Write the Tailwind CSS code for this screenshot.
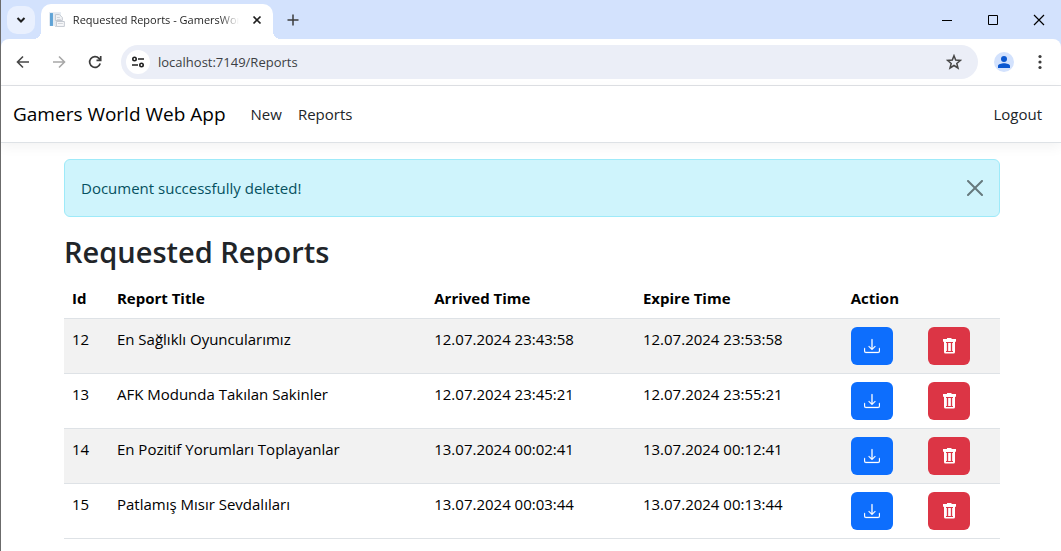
<!DOCTYPE html>
<html lang="en">
<head>
<meta charset="utf-8">
<title>Requested Reports - GamersWorld</title>
<script src="https://cdn.jsdelivr.net/npm/@tailwindcss/browser@4"></script>
</head>
<body class="min-h-screen overflow-hidden border-l border-[#6b6b6b] bg-white font-['Open_Sans','Noto_Sans',sans-serif] text-[15px] leading-6 text-[#212529]">
<svg class="hidden">
  <symbol id="download" viewBox="0 0 16 16"><path d="M.5 9.900a.5.5 0 0 1 .5.5v2.500a1 1 0 0 0 1 1h12a1 1 0 0 0 1-1v-2.500a.5.5 0 0 1 1 0v2.500a2 2 0 0 1-2 2H2a2 2 0 0 1-2-2v-2.500a.5.5 0 0 1 .5-.5" stroke="currentColor" stroke-width=".3"/><path d="M7.646 11.854a.5.5 0 0 0 .708 0l3-3a.5.5 0 0 0-.708-.708L8.500 10.293V1.500a.5.5 0 0 0-1 0v8.793L5.354 8.146a.5.5 0 1 0-.708.708z" stroke="currentColor" stroke-width=".3"/></symbol>
  <symbol id="trash" viewBox="0 0 16 16"><path d="M6 0h4.500v1H15v2.800h-1V14a1.500 1.500 0 0 1-1.500 1.500h-8A1.500 1.500 0 0 1 3 14V3.800H2V1h4z"/><path fill="#f9dfe2" d="M5 5h7v8H5z"/><path fill="#dc3545" d="M5 4h7v1H5zM5 13h7v1H5zM6 5h1v8H6zM10 5h1v8h-1z"/><path d="M8 5h1v8H8z"/></symbol>
</svg>

<header>
  <div class="flex h-[39px] items-center bg-[#d3e2fd]">
    <button aria-label="Search tabs" class="ml-1.5 flex size-7 items-center justify-center rounded-[10px] bg-[#e9f0fe]"><svg class="size-3" viewBox="0 0 12 12" fill="none" stroke="#1f1f1f" stroke-width="2"><path d="M2.500 4l3.500 3.500L9.500 4"/></svg></button>
    <div class="relative ml-1.5 mt-1 flex h-[35px] w-[232px] items-center rounded-t-[10px] bg-white px-2 pb-1 before:absolute before:bottom-0 before:-left-2 before:size-2 before:bg-[radial-gradient(circle_at_0_0,transparent_8px,white_8px)] after:absolute after:bottom-0 after:-right-2 after:size-2 after:bg-[radial-gradient(circle_at_100%_0,transparent_8px,white_8px)]">
      <svg class="size-4" viewBox="0 0 16 16"><path fill="#e4ebf2" d="M0 0h12v14H0z"/><path fill="#5fa3d6" d="M1 1h3v13H1z"/><path fill="#f0f2f5" stroke="#c3c8d0" d="M6.500 2.500h4l3 3v3h-7z"/><path fill="#f7f8fa" stroke="#c3c8d0" d="M7.500 9.500h8v5h-8z"/><path stroke="#d0d4da" d="M9 11.500h5M6 14.500h2M8 5.500h3M8 7.500h4"/></svg>
      <span class="ml-2 w-[168px] overflow-hidden whitespace-nowrap bg-linear-to-r from-[#1f1f1f] from-88% to-transparent bg-clip-text text-[11px] text-transparent">Requested Reports - GamersWorld</span>
      <button aria-label="Close tab" class="ml-2.5 flex size-4 items-center justify-center"><svg class="size-2.5" viewBox="0 0 10 10" stroke="#1f1f1f" stroke-width="1.700"><path d="M1.500 1.500l7 7M8.500 1.500l-7 7"/></svg></button>
    </div>
    <button aria-label="New tab" class="ml-3 flex size-4 items-center justify-center"><svg class="size-3" viewBox="0 0 12 12" stroke="#3c3c3c" stroke-width="1.500"><path d="M6 .5v11M.5 6h11"/></svg></button>
    <div class="ml-auto mr-4 flex items-center gap-[34px]">
      <button aria-label="Minimize"><svg class="size-3" viewBox="0 0 12 12" stroke="#000"><path d="M1 6.500h10"/></svg></button>
      <button aria-label="Maximize"><svg class="size-3" viewBox="0 0 12 12" fill="none" stroke="#000"><path d="M1.500 1.500h9v9h-9z"/></svg></button>
      <button aria-label="Close"><svg class="size-3" viewBox="0 0 12 12" stroke="#000" stroke-width="1.200"><path d="M1 1l10 10M11 1L1 11"/></svg></button>
    </div>
  </div>
  <div class="bg-[#d3e2fd]">
  <div class="flex h-[47px] items-center rounded-t-lg border-b border-[#dfe1e5] bg-white pr-[13px] pl-3.5">
    <div class="flex items-center gap-5">
      <button aria-label="Back"><svg class="size-4" viewBox="0 0 16 16" fill="none" stroke="#474747" stroke-width="1.600"><path d="M14 8H3M8 2.500L2.500 8 8 13.500"/></svg></button>
      <button aria-label="Forward"><svg class="size-4" viewBox="0 0 16 16" fill="none" stroke="#a8a8a8" stroke-width="1.600"><path d="M2 8h11M8 2.500L13.500 8 8 13.500"/></svg></button>
      <button aria-label="Reload"><svg class="size-4" viewBox="0 0 16 16" fill="none" stroke="#3c3c3c" stroke-width="1.700"><path d="M13.200 9.500A5.400 5.400 0 1 1 12 4.300l1.500 1.600M13.700 2v4.300H9.500"/></svg></button>
    </div>
    <div class="ml-[18px] flex h-[34px] flex-1 items-center rounded-full bg-[#ebeef7] pr-4 pl-[5px]">
      <button aria-label="Site information" class="flex size-6 items-center justify-center rounded-full bg-white"><svg class="size-3.5" viewBox="0 0 14 14" fill="none" stroke="#1f1f1f" stroke-width="1.600"><circle cx="3.500" cy="4" r="1.700"/><path d="M7 4h6M1 10h6"/><circle cx="10.500" cy="10" r="1.700"/></svg></button>
      <input aria-label="Address" value="localhost:7149/Reports" class="ml-2 min-w-0 flex-1 bg-transparent text-[13px] text-[#3c3f44] outline-none">
      <button aria-label="Bookmark"><svg class="size-4" viewBox="0 0 16 16" fill="none" stroke="#474747" stroke-width="1.500"><path d="M8 1.700l1.700 4.400 4.700.3-3.600 3 1.200 4.600L8 11.500 4 14l1.200-4.600-3.600-3 4.700-.3z"/></svg></button>
    </div>
    <button aria-label="Profile" class="ml-4 flex size-5 items-center justify-center rounded-full bg-[#d3e2fd]"><svg class="size-3" viewBox="0 0 12 12" fill="#0b57d0"><circle cx="6" cy="3" r="3"/><path d="M0 12v-2C0 8.300 3.500 7.300 6 7.300s6 1 6 2.700v2z"/></svg></button>
    <button aria-label="Menu" class="ml-[18px]"><svg class="size-4" viewBox="0 0 16 16" fill="#3c3c3c"><circle cx="8" cy="2.500" r="1.600"/><circle cx="8" cy="8" r="1.600"/><circle cx="8" cy="13.500" r="1.600"/></svg></button>
  </div>
  </div>
</header>

<nav class="mb-4 flex h-[57px] items-center border-b border-[#dee2e6] pr-[11px] pl-3 shadow-[0_4px_12px_rgba(0,0,0,0.05)]">
  <a href="#" class="mr-[17px] text-[19px] text-black">Gamers World Web App</a>
  <a href="#" class="px-2">New</a>
  <a href="#" class="px-2">Reports</a>
  <a href="#" class="ml-auto px-2">Logout</a>
</nav>

<main class="mr-[61px] ml-[63px]">
  <div role="alert" class="mb-4 flex items-center justify-between rounded-md border border-[#9eeaf9] bg-[#cff4fc] p-4 text-[#055160]">
    Document successfully deleted!
    <button aria-label="Close" class="opacity-50"><svg class="size-4" viewBox="0 0 16 16"><path d="M.293.293a1 1 0 0 1 1.414 0L8 6.586 14.293.293a1 1 0 1 1 1.414 1.414L9.414 8l6.293 6.293a1 1 0 0 1-1.414 1.414L8 9.414l-6.293 6.293a1 1 0 0 1-1.414-1.414L6.586 8 .293 1.707a1 1 0 0 1 0-1.414"/></svg></button>
  </div>
  <h1 class="mb-[7px] text-[29px] leading-[38px] font-semibold">Requested Reports</h1>
  <table class="w-full table-fixed border-collapse text-left text-black [&_td]:p-2 [&_td]:align-top [&_th]:p-2 [&_th]:font-bold [&_tr]:border-b [&_tr]:border-[#dee2e6]">
    <colgroup><col class="w-[4.800%]"><col class="w-[33.900%]"><col class="w-[22.300%]"><col class="w-[22.200%]"><col class="w-[8.300%]"><col></colgroup>
    <thead><tr><th>Id</th><th>Report Title</th><th>Arrived Time</th><th>Expire Time</th><th colspan="2">Action</th></tr></thead>
    <tbody id="rows" class="[&_tr:nth-child(odd)]:bg-[#f2f2f2]"></tbody>
  </table>
</main>

<script>
const reports = [
  [12, "En Sağlıklı Oyuncularımız", "12.07.2024 23:43:58", "12.07.2024 23:53:58"],
  [13, "AFK Modunda Takılan Sakinler", "12.07.2024 23:45:21", "12.07.2024 23:55:21"],
  [14, "En Pozitif Yorumları Toplayanlar", "13.07.2024 00:02:41", "13.07.2024 00:12:41"],
  [15, "Patlamış Mısır Sevdalıları", "13.07.2024 00:03:44", "13.07.2024 00:13:44"],
];
document.getElementById("rows").innerHTML = reports.map(r => `<tr>${r.map(v => `<td>${v}</td>`).join("")}
  <td><button aria-label="Download report ${r[0]}" class="flex h-[38px] w-[42px] items-center justify-center rounded-md bg-[#0d6efd] text-white"><svg class="size-4 fill-current"><use href="#download"/></svg></button></td>
  <td><button aria-label="Delete report ${r[0]}" class="flex h-[38px] w-[42px] items-center justify-center rounded-md bg-[#dc3545] text-white"><svg class="size-4 fill-current"><use href="#trash"/></svg></button></td></tr>`).join("");
</script>
</body>
</html>
